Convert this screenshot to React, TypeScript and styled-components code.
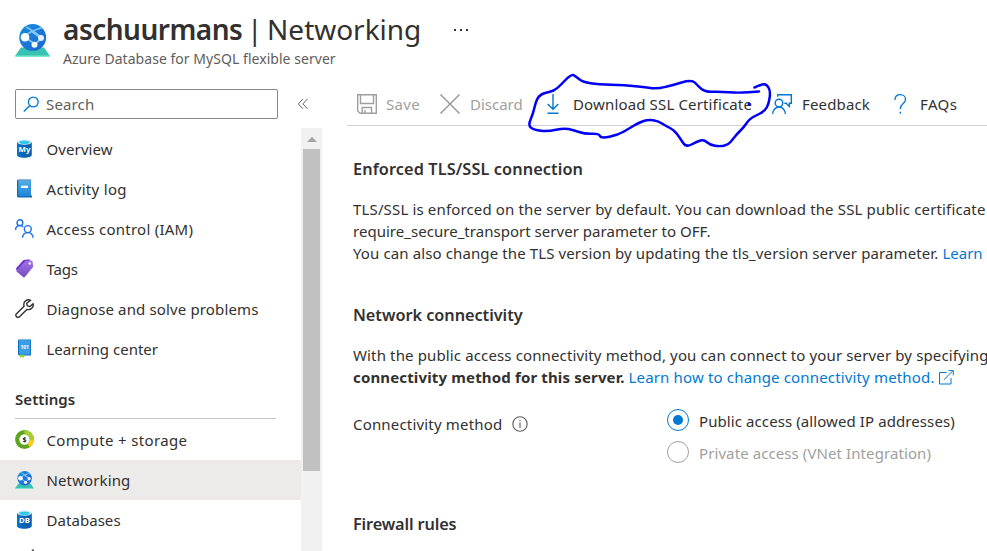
import React from "react";
import styled, { createGlobalStyle } from "styled-components";

const color = {
  text: "#323130",
  subtle: "#605e5c",
  disabled: "#a19f9d",
  link: "#0078d4",
  line: "#c8c6c4",
};

const GlobalStyle = createGlobalStyle`
  *, *::before, *::after { box-sizing: border-box; }
  body {
    margin: 0;
    background: #fff;
    color: ${color.text};
    font-family: "Noto Sans", "Open Sans", sans-serif;
    font-size: 15px;
    overflow: hidden;
  }
  svg { display: block; flex: none; }
`;

const Page = styled.div`
  position: relative;
  width: 987px;
  height: 551px;
  overflow: hidden;
  display: flex;
  flex-direction: column;
`;

const Text = styled.span<{ $track?: number }>`
  white-space: pre;
  letter-spacing: ${(p) => p.$track ?? 0}px;
`;

/* Header */

const Header = styled.header`
  height: 75px;
  flex: none;
  display: flex;
  align-items: flex-start;
  padding-left: 15px;
`;

const HeaderIcon = styled.div`
  width: 48px;
  padding-top: 22px;
`;

const Titles = styled.div`
  display: flex;
  flex-direction: column;
  width: 357px;
`;

const Title = styled.h1`
  margin: 10px 0 0;
  height: 38px;
  line-height: 38px;
  font-size: 28px;
  font-weight: 400;
  white-space: pre;
`;

const TitleName = styled(Text)`
  font-weight: 600;
`;

const TitleSection = styled(Text)`
  word-spacing: -2.6px;
`;

const Subtitle = styled(Text)`
  height: 20px;
  line-height: 20px;
  margin-top: 1px;
  font-size: 14px;
  color: ${color.subtle};
`;

const MoreDots = styled.div`
  display: flex;
  gap: 4px;
  margin: 29px 0 0 34px;
`;

const Dot = styled.i`
  width: 2px;
  height: 2px;
  background: ${color.text};
`;

/* Body */

const Columns = styled.div`
  display: flex;
  flex: 1;
  min-height: 0;
`;

const Sidebar = styled.aside`
  width: 322px;
  flex: none;
  display: flex;
  flex-direction: column;
`;

const SearchRow = styled.div`
  display: flex;
  align-items: center;
  height: 30px;
  flex: none;
  margin: 14px 0 9px 15px;
`;

const SearchBox = styled.div`
  width: 263px;
  height: 30px;
  display: flex;
  align-items: center;
  gap: 6px;
  padding: 0 0 0 7px;
  border: 1px solid #8a8886;
  border-radius: 2px;
  color: ${color.subtle};
  margin-right: 19px;
`;

const MenuArea = styled.div`
  display: flex;
  flex: 1;
  min-height: 0;
`;

const Menu = styled.nav`
  width: 301px;
  padding-top: 1px;
  overflow: hidden;
`;

const MenuItem = styled.div<{ $selected?: boolean }>`
  height: 40px;
  padding: 0 0 1px 15px;
  display: flex;
  align-items: center;
  gap: 12.500px;
  background: ${(p) => (p.$selected ? "#edebe9" : "transparent")};
`;

const MenuHeading = styled.div`
  height: 50px;
  margin: 0 25px 1px 15px;
  padding-top: 11px;
  line-height: 38px;
  font-weight: 600;
  border-bottom: 1px solid ${color.line};
`;

const ScrollTrack = styled.div`
  width: 21px;
  background: #f1f1f1;
  display: flex;
  flex-direction: column;
  align-items: center;
`;

const ScrollArrow = styled.div`
  width: 0;
  margin: 9px 0 7px;
  border: 5px solid transparent;
  border-top-width: 0;
  border-bottom-color: #a3a3a3;
`;

const ScrollThumb = styled.div`
  width: 17px;
  height: 322px;
  background: #c1c1c1;
`;

/* Main pane */

const Main = styled.main`
  flex: 1;
  min-width: 0;
  margin-left: 25px;
  overflow: hidden;
`;

const Toolbar = styled.div`
  height: 51px;
  display: flex;
  align-items: center;
  padding: 8px 0 0 10px;
  border-bottom: 1px solid #d2d0ce;
`;

const Command = styled.div<{ $width: number; $gap: number; $disabled?: boolean }>`
  width: ${(p) => p.$width}px;
  flex: none;
  display: flex;
  align-items: center;
  gap: ${(p) => p.$gap}px;
  color: ${(p) => (p.$disabled ? color.disabled : color.text)};
`;

const Content = styled.div`
  padding: 32px 0 0 6px;
`;

const Heading = styled.h2<{ $track: number }>`
  margin: 0;
  height: 22px;
  line-height: 22px;
  font-size: 16.3px;
  font-weight: 600;
  letter-spacing: ${(p) => p.$track}px;
  white-space: nowrap;
`;

const Paragraph = styled.div<{ $after: number }>`
  margin: 18px 0 ${(p) => p.$after}px;
`;

const Line = styled.div`
  height: 22px;
  display: flex;
  align-items: center;
  white-space: pre;
`;

const Strong = styled(Text)`
  font-weight: 700;
  margin-right: 4px;
`;

const Link = styled(Text)`
  color: ${color.link};
`;

const Field = styled.div`
  display: flex;
  align-items: flex-start;
  margin-bottom: 45px;
`;

const FieldLabel = styled.div`
  width: 314px;
  height: 32px;
  display: flex;
  align-items: center;
  gap: 10px;
`;

const Options = styled.div`
  display: flex;
  flex-direction: column;
  margin-top: -4px;
`;

const Option = styled.div<{ $disabled?: boolean }>`
  height: 32px;
  display: flex;
  align-items: center;
  gap: 10px;
  color: ${(p) => (p.$disabled ? color.disabled : color.text)};
`;

const OptionLabel = styled(Text)`
  padding-top: 2px;
`;

const Radio = styled.span<{ $checked?: boolean }>`
  width: 22px;
  height: 22px;
  border-radius: 50%;
  border: 1px solid ${(p) => (p.$checked ? color.link : color.disabled)};
  display: grid;
  place-items: center;
  &::after {
    content: "";
    width: 10px;
    height: 10px;
    border-radius: 50%;
    background: ${(p) => (p.$checked ? color.link : "transparent")};
  }
`;

const Annotation = styled.svg`
  position: absolute;
  inset: 0;
  pointer-events: none;
`;

/* Icons */

const NetworkIcon = ({ size, id }: { size: number; id: string }) => (
  <svg width={size} height={size} viewBox="0 0 35 35">
    <defs>
      <linearGradient id={id} x1="0" y1="0" x2="1" y2="1">
        <stop offset="0" stopColor="#1490df" />
        <stop offset="1" stopColor="#1f62d0" />
      </linearGradient>
      <clipPath id={id + "c"}><circle cx="17.7" cy="15.4" r="13.4" /></clipPath>
    </defs>
    <path d="M6 25.500h23l6 8.500H0z" fill="#37c2b1" />
    <path d="M.6 33.600h33.800L35 35H0z" fill="#7be6d3" />
    <circle cx="17.7" cy="15.4" r="13.4" fill={`url(#${id})`} />
    <g clipPath={`url(#${id}c)`} fill="none" stroke="#83c6f5" strokeWidth="1.800">
      <path d="M10 14Q15 9 29 5M11 5Q17 8 26 15M11 16L20 22M16 9L26 16M27 16L20 22" />
    </g>
    <circle cx="10" cy="15.2" r="4.3" fill="#fff" />
    <circle cx="26" cy="16" r="3" fill="#e9f1fb" />
    <circle cx="19.5" cy="22.7" r="3" fill="#f4f8fd" />
  </svg>
);

const CylinderIcon = ({ label }: { label: string }) => (
  <svg width="19" height="19" viewBox="0 0 19 19">
    <path d="M2.2 3v13c0 1.500 3.300 2.700 7.300 2.700s7.300-1.200 7.300-2.700V3z" fill="#0a62ae" />
    <path d="M2.200 3v13c0 1 1.600 1.900 4.300 2.400V3z" fill="#0071c8" />
    <ellipse cx="9.500" cy="3" rx="7.300" ry="2.700" fill="#d9eff8" />
    <ellipse cx="9.500" cy="3.200" rx="5.400" ry="1.800" fill="#32c8ea" />
    <text x="9.500" y="13.400" textAnchor="middle" fontSize="7.800" fontWeight="700" fill="#fff">{label}</text>
  </svg>
);

const BookIcon = () => (
  <svg width="19" height="19" viewBox="0 0 19 19">
    <defs>
      <linearGradient id="book" x1="0" y1="0" x2="0" y2="1">
        <stop offset="0" stopColor="#51afea" />
        <stop offset="1" stopColor="#1c84d8" />
      </linearGradient>
    </defs>
    <path d="M3.500.4h12.300v16H17V18.500H3.500A1.500 1.500 0 0 1 2 17V2A1.500 1.500 0 0 1 3.500.4z" fill="#1268b3" />
    <path d="M3.200 1.500h12.300v15.800H3.200z" fill="url(#book)" />
    <path d="M3.200.5H16.500v1H3.200z" fill="#8fb6cf" />
    <path d="M6 6.700h7v2.200H6z" fill="#fff" />
  </svg>
);

const PeopleIcon = () => (
  <svg width="19" height="19" viewBox="0 0 19 19" fill="none" stroke="#1f6feb" strokeWidth="1.400">
    <circle cx="4.900" cy="3.700" r="2.900" />
    <path d="M.7 11V10c0-2.100 1.800-3.500 4-3.500 1.400 0 2.600.5 3.400 1.500" />
    <circle cx="12.800" cy="10.100" r="3.500" />
    <path d="M7.500 18.800c.2-3 2.300-5.200 5.200-5.200s5.100 2.200 5.400 5.200" />
  </svg>
);

const TagIcon = () => (
  <svg width="19" height="19" viewBox="0 0 19 19">
    <defs>
      <linearGradient id="tag" x1="0" y1="0" x2="0" y2="1">
        <stop offset="0" stopColor="#a175e8" />
        <stop offset="1" stopColor="#7749bd" />
      </linearGradient>
    </defs>
    <path d="M8.500 1L15 .3l-1 2.500L4 12.500l-2.200 0L1 9.300z" fill="#7433d5" />
    <path d="M10.500 2l5.500-.6c.9 0 1.500.5 1.600 1.300l.5 5.400-8.300 9.900c-.5.6-1 .6-1.600.1L2 12.900c-.5-.5-.5-1 0-1.600z" fill="url(#tag)" />
    <circle cx="14.800" cy="4.500" r="1.300" fill="#eee4ff" />
  </svg>
);

const WrenchIcon = () => (
  <svg width="19" height="19" viewBox="0 0 19 19" fill="none" stroke="#323130" strokeWidth="1.400" strokeLinejoin="round">
    <path d="M15.700 1.300C12.500-.2 8.600 2 8.800 5.600c0 .8.1 1.200.3 1.700L1.300 14.900a2.150 2.150 0 0 0 3 3l7.800-7.600c3.600 1.200 6.900-2.100 6-5.600l-3.100 2.900-2.700-.7-.6-2.600z" />
  </svg>
);

const LearningIcon = () => (
  <svg width="19" height="19" viewBox="0 0 19 19">
    <path d="M4.200.4H16v16.200H4.500A1.500 1.500 0 0 1 3 15.100V1.700A1.300 1.300 0 0 1 4.200.4z" fill="#1268b3" />
    <path d="M4 1h11.300v14.600H4z" fill="#36a0e8" />
    <path d="M5 15.800h4.200v3.100L7.100 17.700 5 18.900z" fill="#86d633" />
    <text x="9.700" y="9.800" textAnchor="middle" fontSize="5" fontWeight="700" fill="#fff">101</text>
  </svg>
);

const ComputeIcon = () => (
  <svg width="19" height="19" viewBox="0 0 19 19">
    <circle cx="9.500" cy="9.500" r="7.300" fill="#fff" stroke="#5ea51f" strokeWidth="4.200" />
    <path d="M9.500 2.200A7.300 7.300 0 0 1 16.800 9.500" fill="none" stroke="#a4d02f" strokeWidth="4.200" />
    <path d="M16.800 9.500A7.300 7.300 0 0 1 13.600 15.500" fill="none" stroke="#ffcb13" strokeWidth="4.200" />
    <text x="9.500" y="12" textAnchor="middle" fontSize="7" fontWeight="700" fill="#222">$</text>
  </svg>
);

const SearchIcon = () => (
  <svg width="17" height="17" viewBox="0 0 17 17" fill="none" stroke="#0078d4" strokeWidth="1.300">
    <circle cx="10.300" cy="6" r="4.900" />
    <path d="M6.800 9.500L.8 15.500" />
  </svg>
);

const CollapseIcon = () => (
  <svg width="12" height="12" viewBox="0 0 12 12" fill="none" stroke="#605e5c" strokeWidth="1">
    <path d="M6 1L1.300 5.900 6 10.800M10.500 1L5.800 5.900l4.700 4.900" />
  </svg>
);

const SaveIcon = () => (
  <svg width="20" height="20" viewBox="0 0 20 20" fill="none" stroke="#a19f9d" strokeWidth="1.400">
    <path d="M.7.7h18.600v18.600H3L.7 17zM3.500.7v8.800h13V.7M5.200 19V13.500h9.300V19M8 19v-3" />
  </svg>
);

const DiscardIcon = () => (
  <svg width="20" height="20" viewBox="0 0 20 20" fill="none" stroke="#979593" strokeWidth="1.400">
    <path d="M.5.5l19 19M19.500.5l-19 19" />
  </svg>
);

const DownloadIcon = () => (
  <svg width="12" height="20" viewBox="0 0 12 20" fill="none" stroke="#0078d4" strokeWidth="1.400">
    <path d="M6 0v15M.7 9.900L6 15.200l5.300-5.300M.5 19.200h11" />
  </svg>
);

const FeedbackIcon = () => (
  <svg width="20" height="20" viewBox="0 0 20 20" fill="none" stroke="#0078d4" strokeWidth="1.400">
    <path d="M5.700 2.800V.7h13.600v8.600h-1.900v3.200l-3.200-3.200h-1.900" />
    <circle cx="7" cy="9" r="3.800" />
    <path d="M.7 20c.2-4 2.800-7 6.300-7s6.200 3 6.400 7" />
  </svg>
);

const QuestionIcon = () => (
  <svg width="13" height="20" viewBox="0 0 13 20" fill="none" stroke="#0078d4" strokeWidth="1.300">
    <path d="M1 6C1 2.700 3.100.7 6.200.7s5.300 2 5.300 4.800c0 4.200-5.200 4.500-5.200 9V15M6.300 17.800v2" />
  </svg>
);

const InfoIcon = () => (
  <svg width="16" height="16" viewBox="0 0 16 16" fill="none" stroke="#605e5c" strokeWidth="1.100">
    <circle cx="8" cy="8" r="7.200" />
    <path d="M8 6.600V12M8 4v1.300" />
  </svg>
);

const ExternalIcon = () => (
  <svg width="15" height="15" viewBox="0 0 15 15" fill="none" stroke="#0078d4" strokeWidth="1">
    <path d="M7.500 2.500H.5v11.500h11.500V8M4.800 9.800L13.900.8M9.600.6h4.700v4.700" />
  </svg>
);

const menuTop: { label: string; track: number; icon: React.ReactNode }[] = [
  { label: "Overview", track: 0.1, icon: <CylinderIcon label="My" /> },
  { label: "Activity log", track: 0.3, icon: <BookIcon /> },
  { label: "Access control (IAM)", track: 0.25, icon: <PeopleIcon /> },
  { label: "Tags", track: -0.2, icon: <TagIcon /> },
  { label: "Diagnose and solve problems", track: 0.14, icon: <WrenchIcon /> },
  { label: "Learning center", track: 0, icon: <LearningIcon /> },
];

const menuSettings: { label: string; track: number; icon: React.ReactNode; selected?: boolean }[] = [
  { label: "Compute + storage", track: 0.34, icon: <ComputeIcon /> },
  { label: "Networking", track: 0.12, icon: <NetworkIcon size={19} id="netSmall" />, selected: true },
  { label: "Databases", track: 0.05, icon: <CylinderIcon label="DB" /> },
];

const outline: [number, number][] = [
  [754.5, 87.500], [761, 84.500], [766.500, 84], [770.500, 91], [769, 103], [765, 111],
  [755, 116], [749, 119.500], [744, 127], [737, 134], [733, 139], [728, 145], [720, 146.500],
  [710, 145], [704, 139.500], [697, 141.500], [686, 147.500], [680, 138], [674, 130], [666, 126],
  [658, 121], [648, 119.500], [638, 123], [630, 128], [618, 135], [601, 138.500],
  [599, 133.500], [585, 134], [573, 130], [564, 128], [548, 131.500], [534, 130],
  [528, 125.500], [533, 114], [536.500, 99], [542, 93.500], [550, 92], [557, 89], [571.500, 73.500],
  [577, 77.500], [583, 82], [598, 84.500], [625, 85], [646, 87.500], [658, 88.800],
  [671, 85.500], [692, 79.500], [698, 86], [705, 92], [720, 91.500], [738, 93], [759, 91.500],
];

/* Joins freehand points with quadratic curves through their midpoints. */
const smooth = (pts: [number, number][]) => {
  let d = `M${pts[0][0]} ${pts[0][1]}`;
  for (let i = 1; i < pts.length - 1; i++) {
    const [x, y] = pts[i];
    const [nx, ny] = pts[i + 1];
    d += `Q${x} ${y} ${(x + nx) / 2} ${(y + ny) / 2}`;
  }
  const last = pts[pts.length - 1];
  return d + `L${last[0]} ${last[1]}`;
};

export default function App() {
  return (
    <Page>
      <GlobalStyle />
      <Header>
        <HeaderIcon><NetworkIcon size={35} id="netLarge" /></HeaderIcon>
        <Titles>
          <Title>
            <TitleName $track={-0.5}>aschuurmans</TitleName>
            <TitleSection $track={-0.03}> | Networking</TitleSection>
          </Title>
          <Subtitle $track={0.04}>Azure Database for MySQL flexible server</Subtitle>
        </Titles>
        <MoreDots><Dot /><Dot /><Dot /></MoreDots>
      </Header>

      <Columns>
        <Sidebar>
          <SearchRow>
            <SearchBox><SearchIcon /><Text $track={0.15}>Search</Text></SearchBox>
            <CollapseIcon />
          </SearchRow>
          <MenuArea>
            <Menu>
              {menuTop.map((m) => (
                <MenuItem key={m.label}>{m.icon}<Text $track={m.track}>{m.label}</Text></MenuItem>
              ))}
              <MenuHeading><Text $track={0.05}>Settings</Text></MenuHeading>
              {menuSettings.map((m) => (
                <MenuItem key={m.label} $selected={m.selected}>{m.icon}<Text $track={m.track}>{m.label}</Text></MenuItem>
              ))}
              <MenuItem>
                <svg width="19" height="21" viewBox="0 0 19 21"><circle cx="18" cy="1.500" r="1.300" fill="#605e5c" /></svg>
              </MenuItem>
            </Menu>
            <ScrollTrack><ScrollArrow /><ScrollThumb /></ScrollTrack>
          </MenuArea>
        </Sidebar>

        <Main>
          <Toolbar>
            <Command $width={83} $gap={9} $disabled><SaveIcon /><Text $track={0.3}>Save</Text></Command>
            <Command $width={107} $gap={10} $disabled><DiscardIcon /><Text $track={0}>Discard</Text></Command>
            <Command $width={225} $gap={14}><DownloadIcon /><Text $track={0.15}>Download SSL Certificate</Text></Command>
            <Command $width={122} $gap={10}><FeedbackIcon /><Text $track={0.15}>Feedback</Text></Command>
            <Command $width={70} $gap={13}><QuestionIcon /><Text $track={0.4}>FAQs</Text></Command>
          </Toolbar>
          <Content>
            <Heading $track={0.1}>Enforced TLS/SSL connection</Heading>
            <Paragraph $after={40}>
              <Line><Text $track={0.15}>TLS/SSL is enforced on the server by default. You can download the SSL public certificate</Text></Line>
              <Line><Text $track={0.03}>require_secure_transport server parameter to OFF.</Text></Line>
              <Line>
                <Text $track={0.115}>You can also change the TLS version by updating the tls_version server parameter. </Text>
                <Link>Learn</Link>
              </Line>
            </Paragraph>
            <Heading $track={-0.04}>Network connectivity</Heading>
            <Paragraph $after={20}>
              <Line><Text $track={0.135}>With the public access connectivity method, you can connect to your server by specifying</Text></Line>
              <Line>
                <Strong $track={0.15}>connectivity method for this server.</Strong>
                <Link $track={0.16}>Learn how to change connectivity method. </Link>
                <ExternalIcon />
              </Line>
            </Paragraph>
            <Field>
              <FieldLabel><Text $track={0.18}>Connectivity method</Text><InfoIcon /></FieldLabel>
              <Options>
                <Option><Radio $checked /><OptionLabel $track={0.09}>Public access (allowed IP addresses)</OptionLabel></Option>
                <Option $disabled><Radio /><OptionLabel $track={0.09}>Private access (VNet Integration)</OptionLabel></Option>
              </Options>
            </Field>
            <Heading $track={-0.14}>Firewall rules</Heading>
          </Content>
        </Main>
      </Columns>

      <Annotation width="987" height="551" viewBox="0 0 987 551">
        <path d={smooth(outline)} fill="none" stroke="#0000f8" strokeWidth="2.500" strokeLinecap="round" strokeLinejoin="round" />
        <circle cx="749" cy="104" r="1.500" fill="#0000f8" />
      </Annotation>
    </Page>
  );
}
